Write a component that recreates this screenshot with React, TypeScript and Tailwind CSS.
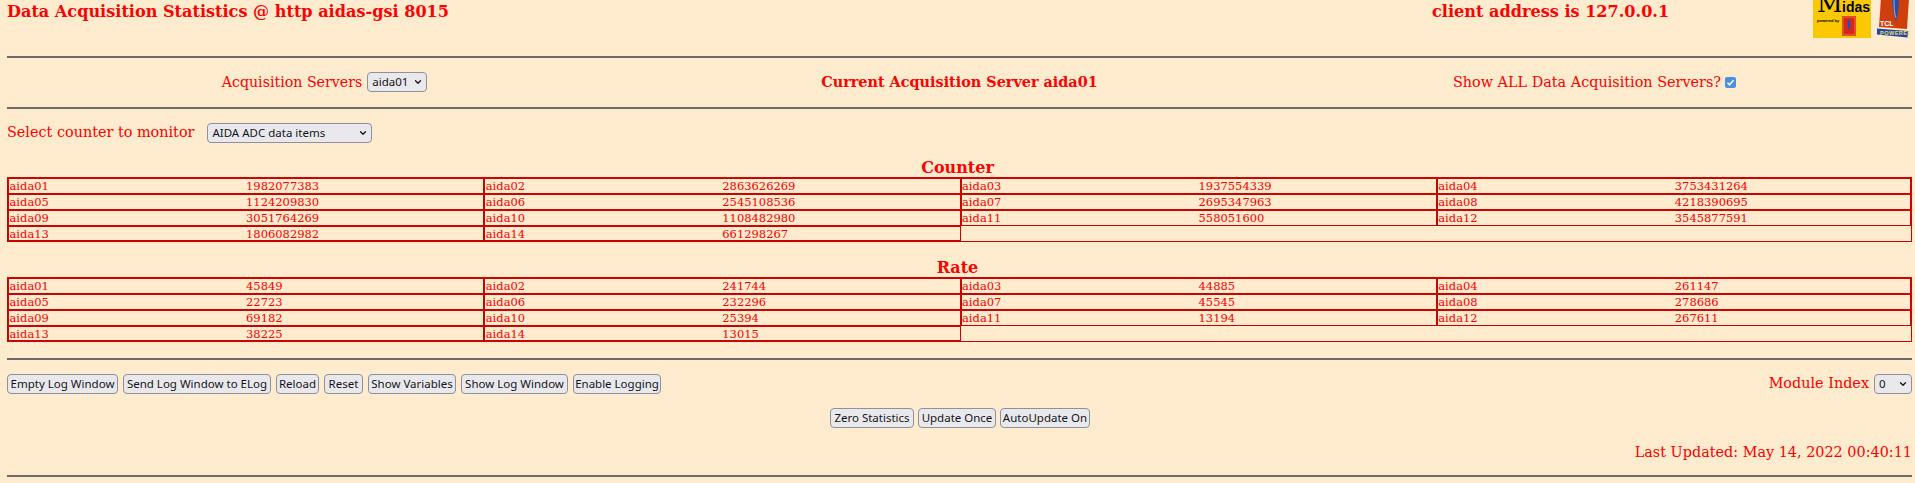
import React from 'react';
import { ChevronDown } from 'lucide-react';

const COUNTERS: [string, string][] = [
  ['aida01', '1982077383'], ['aida02', '2863626269'], ['aida03', '1937554339'], ['aida04', '3753431264'],
  ['aida05', '1124209830'], ['aida06', '2545108536'], ['aida07', '2695347963'], ['aida08', '4218390695'],
  ['aida09', '3051764269'], ['aida10', '1108482980'], ['aida11', '558051600'], ['aida12', '3545877591'],
  ['aida13', '1806082982'], ['aida14', '661298267'],
];
const RATES: [string, string][] = [
  ['aida01', '45849'], ['aida02', '241744'], ['aida03', '44885'], ['aida04', '261147'],
  ['aida05', '22723'], ['aida06', '232296'], ['aida07', '45545'], ['aida08', '278686'],
  ['aida09', '69182'], ['aida10', '25394'], ['aida11', '13194'], ['aida12', '267611'],
  ['aida13', '38225'], ['aida14', '13015'],
];

const uiFont = "font-['Noto_Sans',sans-serif] text-[11.5px] text-[#15141a]";

const Rule = () => <div className="h-[2px] bg-[#6b6b6b] mx-[7px] w-[1905px] shrink-0"></div>;

const Btn = ({ label, width }: { label: string; width: string }) => <button className={`h-[20px] ${width} shrink-0 rounded-[4px] border border-[#8f8f9d] bg-[#e9e9ed] text-center leading-none whitespace-nowrap ${uiFont}`}>
    {label}
  </button>;

const Select = ({ value, width }: { value: string; width: string }) => <span className={`relative inline-block h-[20px] ${width} shrink-0`}>
    <select defaultValue={value} className={`h-full w-full appearance-none rounded-[4px] border border-[#8f8f9d] bg-[#e9e9ed] pl-[4px] leading-none ${uiFont}`}>
      <option>{value}</option>
    </select>
    <ChevronDown className="absolute right-[4px] top-[5px] h-[10px] w-[10px] text-[#15141a] pointer-events-none" strokeWidth={3} />
  </span>;

const StatsTable = ({ rows }: { rows: [string, string][] }) => <div className="grid grid-cols-4 mx-[7px] w-[1905px] font-['DejaVu_Serif',serif] text-[11.5px] leading-[14px] text-[#ff0000]">
    {rows.map(([name, value], i) => {
    const lastRow = i >= 12;
    const lastCol = i % 4 === 3;
    return <div key={name} className={`flex border-t-2 border-l-2 border-[#cc0000] ${lastRow ? 'h-[17px] border-b-2' : 'h-[16px]'} ${lastCol ? 'border-r-2' : ''}`}>
          <span className="w-[237px] pl-[0.5px]">{name}</span>
          <span>{value}</span>
        </div>;
  })}
    <div className="col-span-2 col-start-3 h-[17px] border border-[#cc0000]"></div>
  </div>;

const MidasLogo = () => <div className="relative h-[38px] w-[58px] overflow-hidden bg-[#fcc800] text-black">
    <span className="absolute left-[4px] -top-[11px] font-['DejaVu_Serif',serif] text-[25px] leading-[30px]">M</span>
    <span className="absolute left-[29px] top-0 font-['Liberation_Sans',sans-serif] text-[14px] font-bold leading-[14px]">idas</span>
    <span className="absolute left-[4px] top-[19px] font-['Liberation_Sans',sans-serif] text-[4px] font-bold leading-none">powered by</span>
    <svg className="absolute left-[29px] top-[16px]" width="14" height="20" viewBox="0 0 14 20">
      <rect width="14" height="20" fill="#d9261c" />
      <rect x="1" y="1" width="12" height="18" fill="none" stroke="#f2a03c" strokeWidth="0.7" />
      <path d="M7 3c-2 3-1.500 8 0 12c1.500-4 2-9 0-12z" fill="#2a4fb0" />
    </svg>
  </div>;

const TclLogo = () => <svg width="33" height="38" viewBox="0 0 33 38">
    <path d="M4-2h28l-2 31L2 27z" fill="#cf3f0c" />
    <path d="M15-2h7c0 8-1 17-3 24c-2-6-4-16-4-24z" fill="#2b4f9e" />
    <path d="M17-2c0 8 0 15 2 20" stroke="#8fb0e0" strokeWidth="1" fill="none" />
    <path d="M0 28.500L31 31L30.500 37.500L0 34.500z" fill="#1d45b5" />
    <text x="3" y="26" fontFamily="Liberation Sans" fontSize="7" fontWeight="700" fill="#ffffff">TCL</text>
    <text x="3" y="34.500" fontFamily="Liberation Sans" fontSize="5.500" fontWeight="700" letterSpacing="0.5" fill="#f6e13a">POWERED</text>
  </svg>;

const App = () => {
  return <div className="flex h-screen w-full flex-col overflow-hidden bg-[#ffebcd] font-['DejaVu_Serif',serif] text-[14.4px] text-[#ff0000]">
      <div className="flex h-[56px] shrink-0 pl-[7px]">
        <div className="w-[1425px] text-[16.1px] font-bold leading-[23px]">Data Acquisition Statistics @ http aidas-gsi 8015</div>
        <div className="w-[381px] text-[16.1px] font-bold leading-[23px]">client address is 127.0.0.1</div>
        <MidasLogo />
        <div className="ml-[6px]"><TclLogo /></div>
      </div>
      <Rule />
      <div className="grid h-[49px] shrink-0 grid-cols-3 items-center pl-[7px] pr-[3px] pb-[1px] leading-none">
        <div className="flex items-center justify-center gap-[5px]">
          <span className="text-[14.2px]">Acquisition Servers</span>
          <Select value="aida01" width="w-[60px]" />
        </div>
        <div className="text-center font-bold">Current Acquisition Server aida01</div>
        <div className="flex items-center justify-center gap-[4px]">
          <span>Show ALL Data Acquisition Servers?</span>
          <span className="flex h-[11px] w-[11px] items-center justify-center rounded-[2px] bg-[#4a90e2]">
            <svg width="9" height="9" viewBox="0 0 9 9"><path d="M1.500 4.800L3.500 6.800L7.500 2.200" fill="none" stroke="#fff" strokeWidth="1.600" /></svg>
          </span>
        </div>
      </div>
      <Rule />
      <div className="mt-[14px] flex h-[20px] shrink-0 items-center gap-[13px] pl-[7px] leading-none">
        <span className="pb-[2px]">Select counter to monitor</span>
        <Select value="AIDA ADC data items" width="w-[165px]" />
      </div>
      <h3 className="mt-[12px] h-[22px] shrink-0 text-center text-[16px] font-bold leading-[25px]">Counter</h3>
      <StatsTable rows={COUNTERS} />
      <h3 className="mt-[13px] h-[22px] shrink-0 text-center text-[16px] font-bold leading-[25px]">Rate</h3>
      <StatsTable rows={RATES} />
      <div className="mt-[16px]"><Rule /></div>
      <div className="mt-[14px] flex h-[20px] shrink-0 items-center justify-between pl-[7px] pr-[3px]">
        <div className="flex gap-[5px]">
          <Btn label="Empty Log Window" width="w-[111px]" />
          <Btn label="Send Log Window to ELog" width="w-[148px]" />
          <Btn label="Reload" width="w-[43px]" />
          <Btn label="Reset" width="w-[39px]" />
          <Btn label="Show Variables" width="w-[88px]" />
          <Btn label="Show Log Window" width="w-[107px]" />
          <Btn label="Enable Logging" width="w-[88px]" />
        </div>
        <div className="flex items-center gap-[5px] leading-none">
          <span className="pb-[1px]">Module Index</span>
          <Select value="0" width="w-[38px]" />
        </div>
      </div>
      <div className="mt-[14px] flex h-[20px] shrink-0 justify-center gap-[4px] pl-[5px]">
        <Btn label="Zero Statistics" width="w-[84px]" />
        <Btn label="Update Once" width="w-[78px]" />
        <Btn label="AutoUpdate On" width="w-[90px]" />
      </div>
      <div className="mt-[14px] h-[20px] shrink-0 pr-[3px] text-right leading-[20px]">Last Updated: May 14, 2022 00:40:11</div>
      <div className="mt-[13px]"><Rule /></div>
    </div>;
};
export default App;
